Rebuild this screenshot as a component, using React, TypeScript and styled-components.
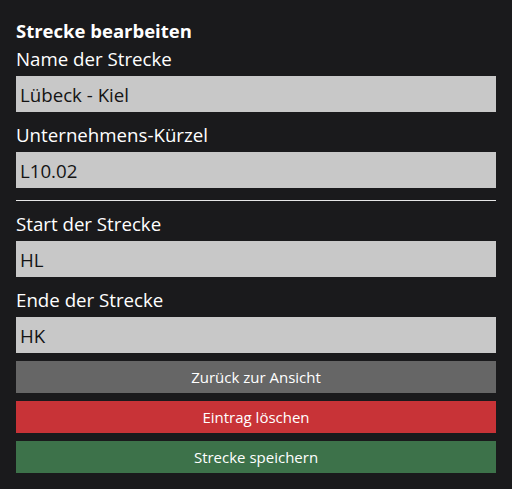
import React from "react";
import styled, { createGlobalStyle } from "styled-components";

const Global = createGlobalStyle`
  html, body {
    margin: 0;
    padding: 0;
    background: #1a1a1c;
  }
  body {
    font-family: "Open Sans", "Noto Sans", sans-serif;
    color: #ffffff;
  }
  * { box-sizing: border-box; }
`;

const Page = styled.div`
  width: 512px;
  min-height: 489px;
  background: #1a1a1c;
  padding: 19px 16px 16px 16px;
  display: flex;
  flex-direction: column;
`;

const Title = styled.h3`
  margin: 0;
  font-size: 18.5px;
  line-height: 24px;
  font-weight: 700;
  color: #ffffff;
`;

const Field = styled.div<{ $first?: boolean }>`
  display: flex;
  flex-direction: column;
  margin-top: ${(p) => (p.$first ? "4px" : "11px")};
`;

const Label = styled.label`
  font-size: 18.7px;
  line-height: 24px;
  color: #ffffff;
  margin-bottom: 5px;
`;

const Input = styled.input`
  height: 36px;
  width: 100%;
  border: none;
  outline: none;
  background: #c8c8c8;
  color: #141414;
  font-family: inherit;
  font-size: 18.7px;
  padding: 0 4px;
  margin: 0;
`;

const Divider = styled.hr`
  border: none;
  height: 1px;
  background: #e6e6e6;
  margin: 12px 0 0 0;
  width: 100%;
`;

const Actions = styled.div`
  display: flex;
  flex-direction: column;
  gap: 8px;
  margin-top: 8px;
`;

const Button = styled.button<{ $bg: string }>`
  height: 32px;
  width: 100%;
  border: none;
  background: ${(p) => p.$bg};
  color: #ffffff;
  font-family: inherit;
  font-size: 15px;
  cursor: pointer;
  padding: 0;
`;

export default function App() {
  return (
    <>
      <Global />
      <Page>
        <Title>Strecke bearbeiten</Title>
        <Field $first>
          <Label htmlFor="name">Name der Strecke</Label>
          <Input id="name" defaultValue="Lübeck - Kiel" />
        </Field>
        <Field>
          <Label htmlFor="kuerzel">Unternehmens-Kürzel</Label>
          <Input id="kuerzel" defaultValue="L10.02" />
        </Field>
        <Divider />
        <Field>
          <Label htmlFor="start">Start der Strecke</Label>
          <Input id="start" defaultValue="HL" />
        </Field>
        <Field>
          <Label htmlFor="ende">Ende der Strecke</Label>
          <Input id="ende" defaultValue="HK" />
        </Field>
        <Actions>
          <Button $bg="#666666">Zurück zur Ansicht</Button>
          <Button $bg="#c83337">Eintrag löschen</Button>
          <Button $bg="#3d724a">Strecke speichern</Button>
        </Actions>
      </Page>
    </>
  );
}
